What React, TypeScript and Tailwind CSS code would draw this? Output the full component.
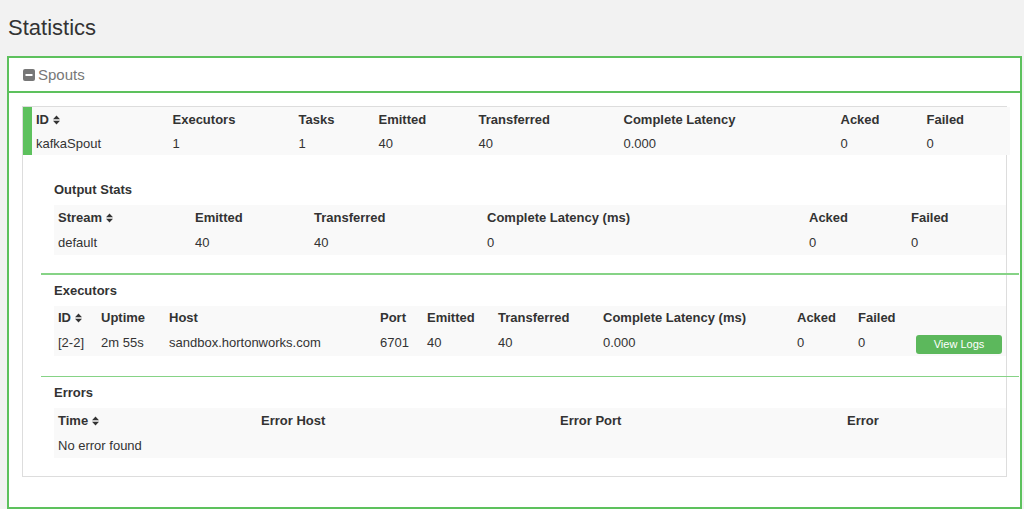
import React from "react";

const GREEN = "#5dc15d";

function SortIcon() {
  return (
    <svg width="7" height="10" viewBox="0 0 7 10" className="ml-[4px] inline-block align-[-1px]">
      <path d="M0 4.2 L3.5 0.6 L7 4.2 Z M0 5.8 L3.5 9.4 L7 5.8 Z" fill="#333" />
    </svg>
  );
}

function MinusSquare() {
  return (
    <svg width="12" height="12" viewBox="0 0 12 12" className="mr-[3px]">
      <rect x="0" y="0" width="12" height="12" rx="2" fill="#777" />
      <rect x="2.5" y="5" width="7" height="2" fill="#fff" />
    </svg>
  );
}

const spoutCols = [141, 126, 80, 100, 145, 217, 86, 87];
const outputCols = [137, 119, 173, 322, 102, 99];
const execCols = [43, 68, 211, 47, 71, 105, 194, 61, 58, 94];
const errorCols = [203, 299, 287, 163];

function Cols({ widths }: { widths: number[] }) {
  return (
    <colgroup>
      {widths.map((w, i) => (
        <col key={i} style={{ width: w }} />
      ))}
    </colgroup>
  );
}

function Separator() {
  return <div className="ml-[18px] mr-[-13px] h-[1.5px] bg-[#86d386]" />;
}

function Section({
  title,
  children,
  top,
  bottom,
}: {
  title: string;
  children: React.ReactNode;
  top: string;
  bottom: string;
}) {
  return (
    <div className={`pl-[31px] ${top} ${bottom}`}>
      <p className="mb-[5px] text-[13px] font-bold leading-[20px] text-[#333]">{title}</p>
      {children}
    </div>
  );
}

export default function App() {
  const th = "px-[4px] text-left font-bold";
  const td = "px-[4px]";

  return (
    <main
      className="min-h-screen bg-[#f2f2f2] text-[#333]"
      style={{ fontFamily: '"Liberation Sans", Arial, Helvetica, sans-serif' }}
    >
      <h1 className="h-[56px] pl-[8px] pt-[16px] text-[22px] leading-[24px] font-normal text-[#333]">
        Statistics
      </h1>

      <div className="ml-[7px] w-[1015px] border-2 border-[#5dc15d] bg-white">
        <div className="flex h-[35px] items-center border-b-2 border-[#5dc15d] pl-[14px] pt-px text-[15px] text-[#777]">
          <MinusSquare />
          <span>Spouts</span>
        </div>

        <div className="px-[13px] pb-[30px] pt-[13px]">
          <div className="border border-[#ddd] pb-[18px]">
            <table className="w-full table-fixed border-collapse bg-[#f9f9f9] text-[13px]">
              <Cols widths={spoutCols} />
              <thead>
                <tr className="h-[24px]">
                  <th className={`${th} pt-px`} style={{ borderLeft: `9px solid ${GREEN}` }}>
                    ID<SortIcon />
                  </th>
                  <th className={`${th} pt-px`}>Executors</th>
                  <th className={`${th} pt-px`}>Tasks</th>
                  <th className={`${th} pt-px`}>Emitted</th>
                  <th className={`${th} pt-px`}>Transferred</th>
                  <th className={`${th} pt-px`}>Complete Latency</th>
                  <th className={`${th} pt-px`}>Acked</th>
                  <th className={`${th} pt-px`}>Failed</th>
                </tr>
              </thead>
              <tbody>
                <tr className="h-[24px]">
                  <td className={`${td} pt-[2px]`} style={{ borderLeft: `9px solid ${GREEN}` }}>
                    kafkaSpout
                  </td>
                  <td className={`${td} pt-[2px]`}>1</td>
                  <td className={`${td} pt-[2px]`}>1</td>
                  <td className={`${td} pt-[2px]`}>40</td>
                  <td className={`${td} pt-[2px]`}>40</td>
                  <td className={`${td} pt-[2px]`}>0.000</td>
                  <td className={`${td} pt-[2px]`}>0</td>
                  <td className={`${td} pt-[2px]`}>0</td>
                </tr>
              </tbody>
            </table>

            <Section title="Output Stats" top="pt-[25px]" bottom="pb-[18px]">
              <table className="w-full table-fixed border-collapse bg-[#f9f9f9] text-[13px]">
                <Cols widths={outputCols} />
                <thead>
                  <tr className="h-[25px]">
                    <th className={th}>
                      Stream<SortIcon />
                    </th>
                    <th className={th}>Emitted</th>
                    <th className={th}>Transferred</th>
                    <th className={th}>Complete Latency (ms)</th>
                    <th className={th}>Acked</th>
                    <th className={th}>Failed</th>
                  </tr>
                </thead>
                <tbody>
                  <tr className="h-[25px]">
                    <td className={td}>default</td>
                    <td className={td}>40</td>
                    <td className={td}>40</td>
                    <td className={td}>0</td>
                    <td className={td}>0</td>
                    <td className={td}>0</td>
                  </tr>
                </tbody>
              </table>
            </Section>

            <Separator />

            <Section title="Executors" top="pt-[6px]" bottom="pb-[20px]">
              <table className="w-full table-fixed border-collapse bg-[#f9f9f9] text-[13px]">
                <Cols widths={execCols} />
                <thead>
                  <tr className="h-[25px]">
                    <th className={th}>
                      ID<SortIcon />
                    </th>
                    <th className={th}>Uptime</th>
                    <th className={th}>Host</th>
                    <th className={th}>Port</th>
                    <th className={th}>Emitted</th>
                    <th className={th}>Transferred</th>
                    <th className={th}>Complete Latency (ms)</th>
                    <th className={th}>Acked</th>
                    <th className={th}>Failed</th>
                    <th className={th}></th>
                  </tr>
                </thead>
                <tbody>
                  <tr className="h-[25px]">
                    <td className={td}>[2-2]</td>
                    <td className={td}>2m 55s</td>
                    <td className={td}>sandbox.hortonworks.com</td>
                    <td className={td}>6701</td>
                    <td className={td}>40</td>
                    <td className={td}>40</td>
                    <td className={td}>0.000</td>
                    <td className={td}>0</td>
                    <td className={td}>0</td>
                    <td className={td}>
                      <button className="mt-[2px] flex h-[19px] w-full items-center justify-center rounded-[3px] bg-[#5cb85c] text-[11px] text-white">
                        View Logs
                      </button>
                    </td>
                  </tr>
                </tbody>
              </table>
            </Section>

            <Separator />

            <Section title="Errors" top="pt-[6px]" bottom="pb-0">
              <table className="w-full table-fixed border-collapse bg-[#f9f9f9] text-[13px]">
                <Cols widths={errorCols} />
                <thead>
                  <tr className="h-[25px]">
                    <th className={th}>
                      Time<SortIcon />
                    </th>
                    <th className={th}>Error Host</th>
                    <th className={th}>Error Port</th>
                    <th className={th}>Error</th>
                  </tr>
                </thead>
                <tbody>
                  <tr className="h-[25px]">
                    <td className={td} colSpan={4}>
                      No error found
                    </td>
                  </tr>
                </tbody>
              </table>
            </Section>
          </div>
        </div>
      </div>
    </main>
  );
}
